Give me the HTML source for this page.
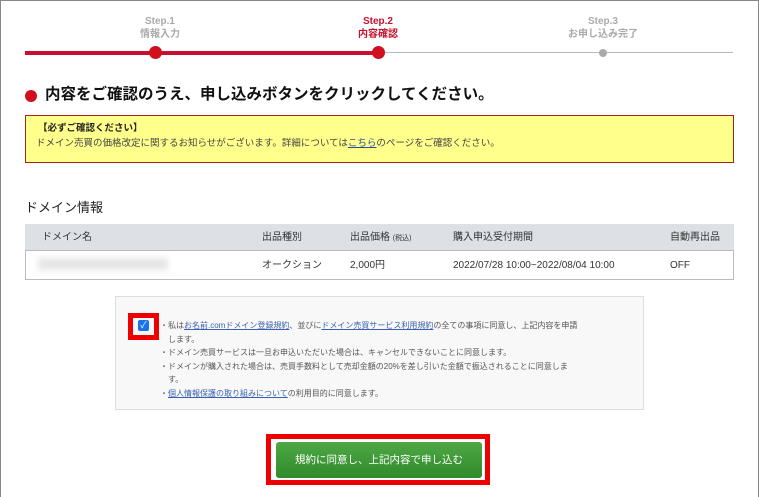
<!DOCTYPE html>
<html><head><meta charset="utf-8"><style>
*{margin:0;padding:0;box-sizing:border-box}
body{width:759px;height:497px;overflow:hidden;background:#fff;font-family:"Liberation Sans","Noto Sans CJK JP",sans-serif;position:relative}
.a{position:absolute;white-space:nowrap}
.frame{position:absolute;left:0;top:0;width:759px;height:497px;border:1px solid #888;border-bottom:none}
.st{font-size:10px;font-weight:bold;color:#aaa;text-align:center;width:120px;line-height:13px}
.red{color:#c8102e}
.dot{position:absolute;border-radius:50%}
.tb{font-size:10px;color:#333;line-height:12px}
.ag{font-size:8px;color:#555;line-height:13.5px}
.ag a{color:#3a5fb0;text-decoration:underline}
</style></head><body>
<div class="frame"></div>
<div class="a st" style="left:100px;top:15px">Step.1<br>情報入力</div>
<div class="a st red" style="left:318px;top:15px">Step.2<br>内容確認</div>
<div class="a st" style="left:543px;top:15px">Step.3<br>お申し込み完了</div>
<div class="a" style="left:25px;top:52px;width:708px;height:1px;background:#bbb"></div>
<div class="a" style="left:25px;top:51px;width:353px;height:4px;background:#c8102e"></div>
<div class="dot" style="left:149px;top:46px;width:13px;height:13px;background:#d0101e"></div>
<div class="dot" style="left:372px;top:46px;width:13px;height:13px;background:#d0101e"></div>
<div class="dot" style="left:599px;top:49px;width:8px;height:8px;background:#aaa"></div>
<div class="dot" style="left:25px;top:90px;width:12px;height:12px;background:#d0101e"></div>
<div class="a" style="left:45px;top:85px;font-size:15.5px;line-height:20px;font-weight:bold;color:#111">内容をご確認のうえ、申し込みボタンをクリックしてください。</div>
<div class="a" style="left:25px;top:115px;width:709px;height:48px;background:#ffff8c;border:1px solid #a8221c"></div>
<div class="a" style="left:38px;top:123px;font-size:9.5px;line-height:12px;font-weight:bold;color:#222">【必ずご確認ください】</div>
<div class="a" style="left:36px;top:138px;font-size:9.5px;line-height:12px;color:#444">ドメイン売買の価格改定に関するお知らせがございます。詳細については<span style="color:#2a4d9a;text-decoration:underline">こちら</span>のページをご確認ください。</div>
<div class="a" style="left:25px;top:197px;font-size:13px;color:#222">ドメイン情報</div>
<div class="a" style="left:25px;top:224px;width:709px;height:56px;border:1px solid #bbb;border-top:none"></div>
<div class="a" style="left:25px;top:224px;width:709px;height:27px;background:#dde1e6;border-bottom:1px solid #bbb"></div>
<div class="a tb" style="left:42px;top:232px">ドメイン名</div>
<div class="a tb" style="left:262px;top:232px">出品種別</div>
<div class="a tb" style="left:350px;top:232px">出品価格 <span style="font-size:7px">(税込)</span></div>
<div class="a tb" style="left:453px;top:232px">購入申込受付期間</div>
<div class="a tb" style="left:670px;top:232px">自動再出品</div>
<div class="a" style="left:38px;top:258px;width:130px;height:12px;background:#e6e6e6;filter:blur(3px)"></div>
<div class="a tb" style="left:262px;top:260px">オークション</div>
<div class="a tb" style="left:350px;top:260px">2,000円</div>
<div class="a tb" style="left:453px;top:260px">2022/07/28 10:00~2022/08/04 10:00</div>
<div class="a tb" style="left:670px;top:260px">OFF</div>
<div class="a" style="left:115px;top:296px;width:529px;height:114px;background:#f8f8f8;border:1px solid #ddd"></div>
<div class="a" style="left:128px;top:313px;width:31px;height:27px;border:5px solid #e00"></div>
<div class="a" style="left:138px;top:320px;width:11px;height:11px;background:#1a73e8;border-radius:2px;color:#fff;font-size:9px;line-height:11px;text-align:center">✓</div>
<div class="a ag" style="left:160px;top:319px">・私は<a>お名前.comドメイン登録規約</a>、並びに<a>ドメイン売買サービス利用規約</a>の全ての事項に同意し、上記内容を申請<br>　します。<br>・ドメイン売買サービスは一旦お申込いただいた場合は、キャンセルできないことに同意します。<br>・ドメインが購入された場合は、売買手数料として売却金額の20%を差し引いた金額で振込されることに同意しま<br>　す。<br>・<a>個人情報保護の取り組みについて</a>の利用目的に同意します。</div>
<div class="a" style="left:266px;top:434px;width:224px;height:51px;border:5px solid #e00"></div>
<div class="a" style="left:276px;top:442px;width:206px;height:36px;border-radius:3px;background:linear-gradient(#4fa845,#2f8a2a);color:#fff;font-size:10.5px;line-height:36px;text-align:center">規約に同意し、上記内容で申し込む</div>
</body></html>
